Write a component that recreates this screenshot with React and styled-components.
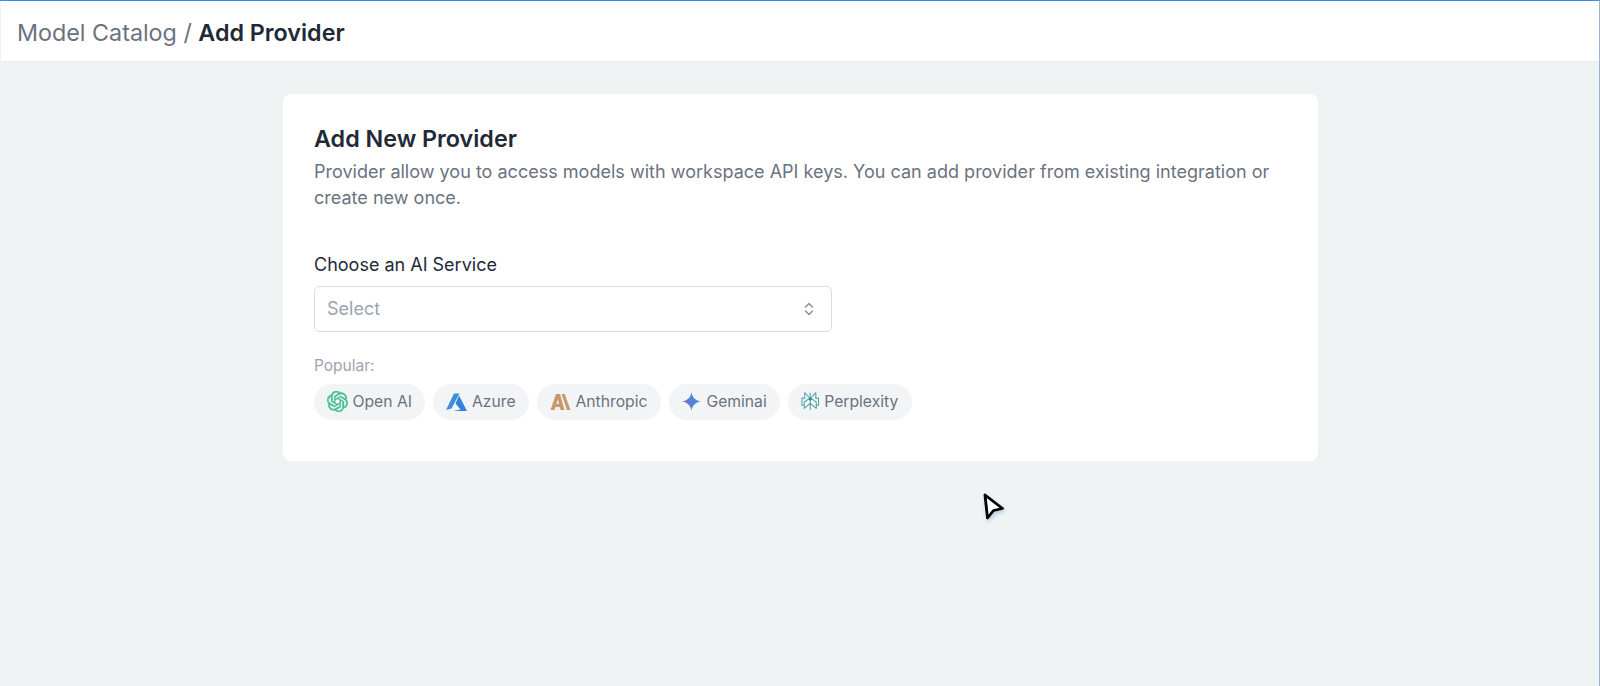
import React from 'react';
import styled, { createGlobalStyle } from 'styled-components';
import { SiOpenai } from 'react-icons/si';

const GlobalStyle = createGlobalStyle`
  html, body {
    margin: 0;
    padding: 0;
    height: 100%;
    background: #f0f3f4;
    font-family: Inter, "Liberation Sans", sans-serif;
  }
`;

const Page = styled.div`
  position: relative;
  width: 1600px;
  height: 686px;
  overflow: hidden;
  background: #f0f3f4;
  border-top: 1px solid #3b8de0;
  border-right: 1px solid #9cb4cf;
  box-sizing: border-box;
`;

const TopBar = styled.header`
  display: flex;
  align-items: center;
  gap: 6.5px;
  height: 61px;
  padding: 2px 16px 0;
  margin-left: 1px;
  background: #fff;
  border-bottom: 1px solid #e9edf0;
  box-sizing: border-box;
  font-size: 23.3px;
`;

const Crumb = styled.span`
  color: ${(p) => (p.$current ? '#1f2937' : '#6b7280')};
  font-weight: ${(p) => (p.$current ? 600 : 400)};
`;

const Main = styled.main`
  display: flex;
  justify-content: center;
  padding: 32px 0 0 2px;
`;

const Card = styled.section`
  width: 1035px;
  height: 367px;
  padding: 31px 31px;
  background: #fff;
  border-radius: 8px;
  box-sizing: border-box;
`;

const Title = styled.h1`
  margin: 0;
  font-size: 23.3px;
  line-height: 28px;
  font-weight: 600;
  color: #1f2937;
`;

const Description = styled.p`
  margin: 6px 0 0;
  font-size: 18.04px;
  line-height: 26px;
  color: #6b7280;
`;

const FieldLabel = styled.label`
  display: block;
  margin-top: 42px;
  font-size: 18px;
  line-height: 24px;
  color: #1f2937;
`;

const SelectBox = styled.div`
  display: flex;
  align-items: center;
  justify-content: space-between;
  width: 518px;
  height: 46px;
  margin-top: 9px;
  padding: 0 15px 1px 12px;
  border: 1.5px solid #d9dce1;
  border-radius: 5px;
  box-sizing: border-box;
  font-size: 18px;
  color: #9ca3af;
`;

const PopularLabel = styled.div`
  margin-top: 24px;
  font-size: 15.5px;
  line-height: 20px;
  color: #9ca3af;
`;

const ChipRow = styled.div`
  display: flex;
  gap: 8px;
  margin-top: 8px;
`;

const Chip = styled.div`
  display: flex;
  align-items: center;
  gap: 4.5px;
  height: 36px;
  padding: 0 13.5px 1px 13px;
  border-radius: 18px;
  background: #f3f4f6;
  box-sizing: border-box;
  font-size: 15.7px;
  color: #6b7280;
`;

const CursorMark = styled.svg`
  position: absolute;
  left: 980px;
  top: 490px;
  filter: drop-shadow(1px 2px 2px rgba(60, 130, 190, 0.35));
`;

const Chevrons = () => (
  <svg width="14" height="18" viewBox="0 0 14 18" fill="none" stroke="#8b919b" strokeWidth="1.5" strokeLinecap="round" strokeLinejoin="round">
    <path d="M3.500 7 7 3.500 10.500 7" />
    <path d="M3.500 11 7 14.500 10.500 11" />
  </svg>
);

const AzureIcon = () => (
  <svg width="21" height="18" viewBox="0 0 21 18">
    <path d="M8 .5h5.500L5.500 15.500 0 17Z" fill="#3a8fdc" />
    <path d="M13 2.500 21 18H7.500l7-1.500L9.500 10.500Z" fill="#2f85d8" />
  </svg>
);

const AnthropicIcon = () => (
  <svg width="21" height="16" viewBox="0 0 20 16" fill="#c79a6e">
    <path fillRule="evenodd" d="M5.500 0h4L14 16h-4l-.7-3H5l-1 3H0ZM7.300 5 6 10h2.500Z" />
    <path d="M11 0h3.200L20 16h-3.600Z" />
  </svg>
);

const GeminiIcon = () => (
  <svg width="20" height="19" viewBox="0 0 19 18">
    <defs>
      <linearGradient id="geminiFill" x1="0" y1="0.7" x2="1" y2="0.3">
        <stop offset="0" stopColor="#8a68c4" />
        <stop offset="0.6" stopColor="#4d86dc" />
        <stop offset="1" stopColor="#4c9be4" />
      </linearGradient>
    </defs>
    <path d="M9 0C9.600 5 13 8.400 18 9 13 9.600 9.600 13 9 18 8.400 13 5 9.600 0 9 5 8.400 8.400 5 9 0Z" fill="url(#geminiFill)" />
  </svg>
);

const PerplexityIcon = () => (
  <svg width="18.500" height="21" viewBox="0 0 20 21" fill="none" stroke="#4fa3ae" strokeWidth="1.1" strokeLinejoin="round">
    <path d="M10 1v19" />
    <path d="M4 1 10 7.500 16 1v6.500" />
    <path d="M4 1v6.500" />
    <path d="M1 6.500v8h2.500M19 6.500v8h-2.500" />
    <path d="M1 6.500 4 7.500M19 6.500 16 7.500" />
    <path d="M3.500 18V11L10 6.500 16.500 11v7L10 12.500Z" />
    <circle cx="10" cy="8" r="1.500" fill="#2f7f8c" stroke="none" />
  </svg>
);

const popular = [
  { name: 'Open AI', icon: <SiOpenai size={21} color="#41bd90" stroke="#41bd90" strokeWidth={0.5} /> },
  { name: 'Azure', icon: <AzureIcon /> },
  { name: 'Anthropic', icon: <AnthropicIcon /> },
  { name: 'Geminai', icon: <GeminiIcon /> },
  { name: 'Perplexity', icon: <PerplexityIcon /> },
];

const App = () => (
  <Page>
    <GlobalStyle />
    <TopBar>
      <Crumb>Model Catalog</Crumb>
      <Crumb>/</Crumb>
      <Crumb $current>Add Provider</Crumb>
    </TopBar>
    <Main>
      <Card>
        <Title>Add New Provider</Title>
        <Description>
          Provider allow you to access models with workspace API keys. You can add provider from existing integration or create new once.
        </Description>
        <FieldLabel>Choose an AI Service</FieldLabel>
        <SelectBox>
          Select
          <Chevrons />
        </SelectBox>
        <PopularLabel>Popular:</PopularLabel>
        <ChipRow>
          {popular.map((item) => (
            <Chip key={item.name}>
              {item.icon}
              {item.name}
            </Chip>
          ))}
        </ChipRow>
      </Card>
    </Main>
    <CursorMark width="26" height="30" viewBox="0 0 26 30">
      <path d="M5 4 22.500 17.500 13.500 19.500 7.500 27Z" fill="#fff" stroke="#000" strokeWidth="2.800" strokeLinejoin="round" />
    </CursorMark>
  </Page>
);

export default App;
